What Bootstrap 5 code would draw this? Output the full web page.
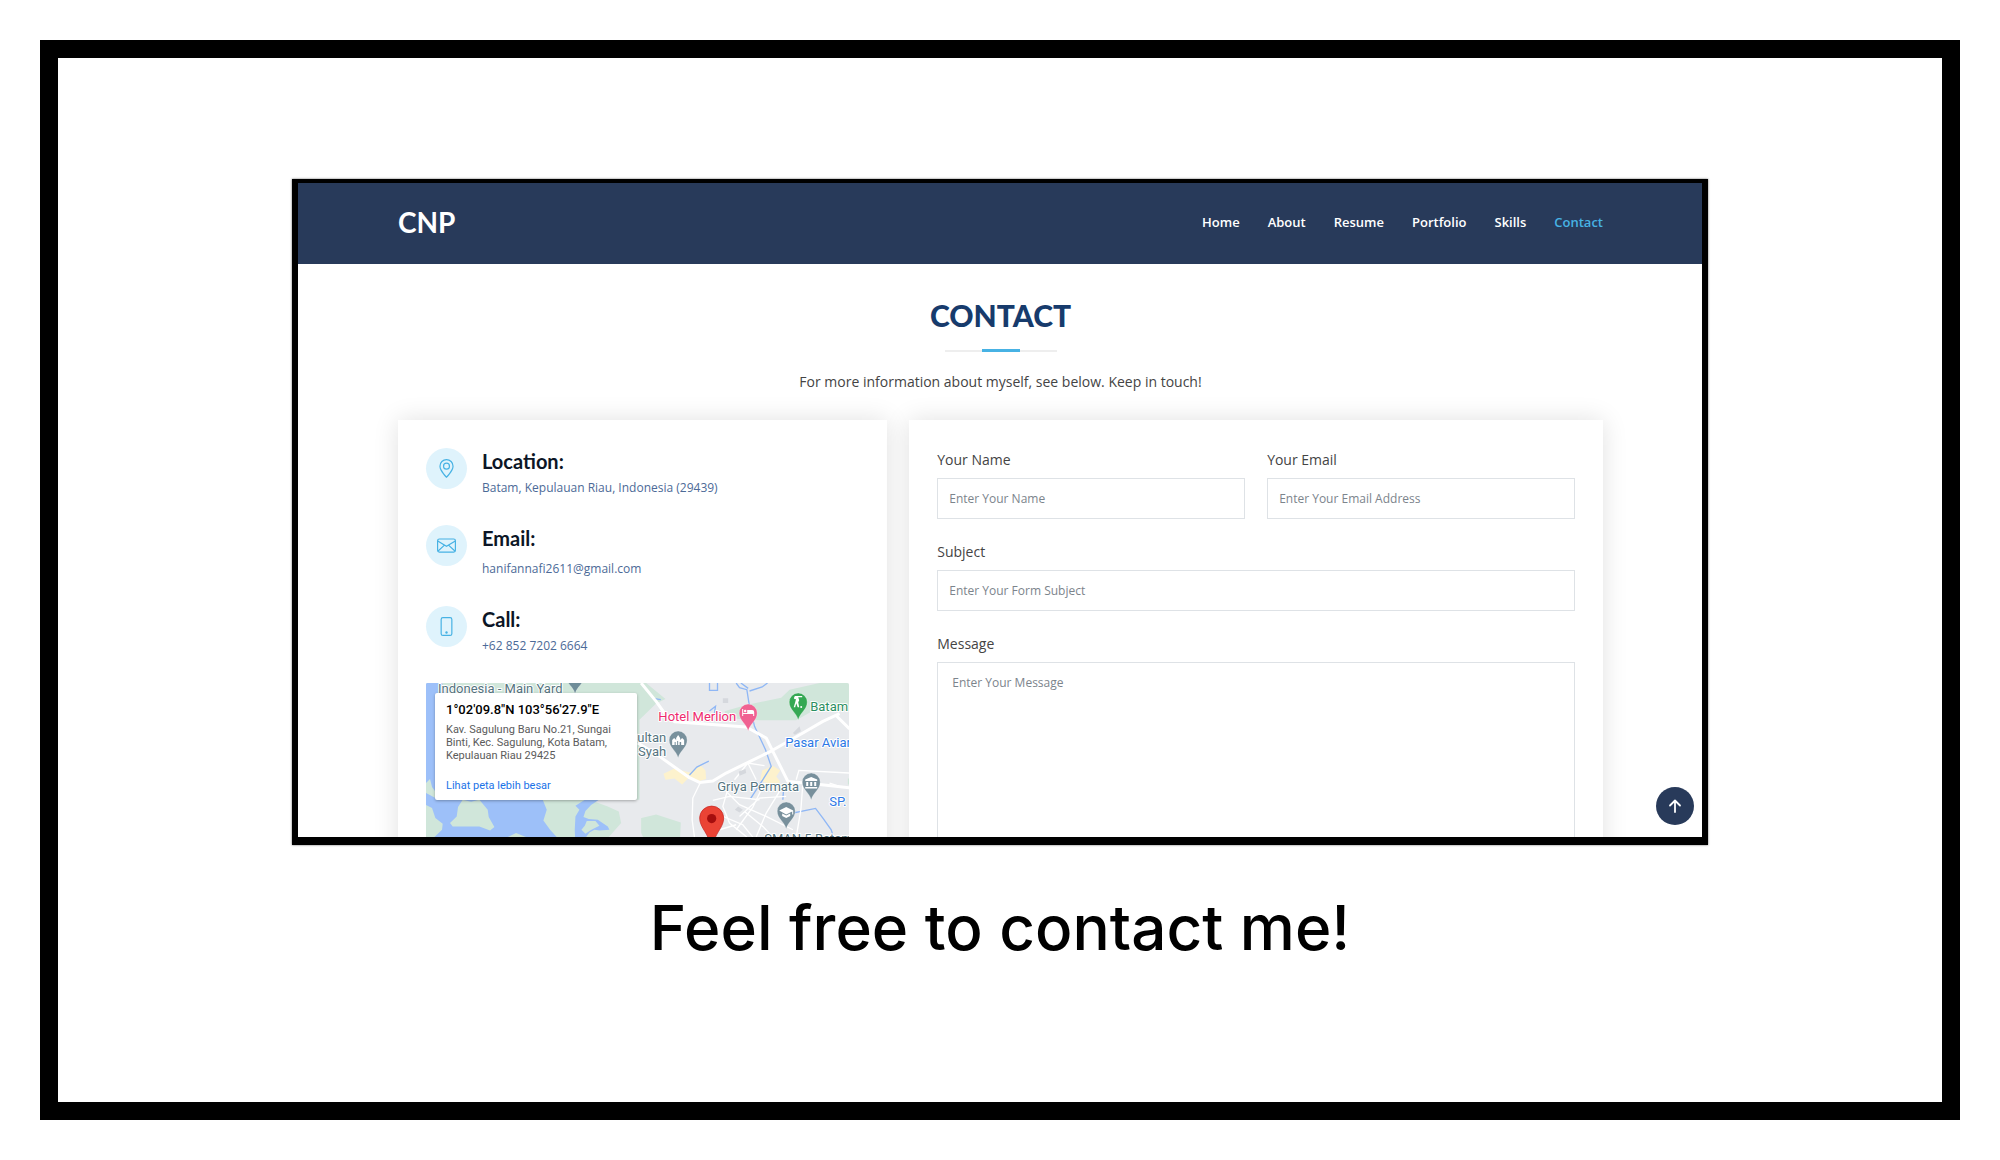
<!DOCTYPE html>
<html lang="en">
<head>
<meta charset="utf-8">
<meta name="viewport" content="width=device-width, initial-scale=1">
<title>CNP - Contact</title>
<link href="https://cdn.jsdelivr.net/npm/bootstrap@5.3.0/dist/css/bootstrap.min.css" rel="stylesheet">
<style>
:root{--navy:#283a5a;--title:#173b6c;--sky:#47b2e4}
body{font-family:"Open Sans","Noto Sans",sans-serif;color:#444;background:#fff;padding:40px}
.slide{border:18px solid #000;min-height:calc(100vh - 80px);padding:121px 24px 48px}
.screen{max-width:1416px;aspect-ratio:1416/666;border:solid #000;border-width:4px 6px 8px;box-shadow:0 0 2px rgba(0,0,0,.6);overflow:hidden}
.site-head{background:var(--navy);min-height:81px;padding:0 99px 3px 100px}
.brand{font-family:Lato,sans-serif;font-size:28px;line-height:36px;font-weight:700;color:#fff}
.site-nav{gap:28px;font-size:13px;line-height:20px;font-weight:600}
.site-nav a{color:#fff}
.site-nav a.active{color:var(--sky)}
.contact{padding:33px 99px 0 100px}
.contact h1{font-family:Lato,sans-serif;font-weight:900;font-size:30px;line-height:36px;color:var(--title)}
.rule{width:112px;height:3px;margin-top:16px;background:linear-gradient(#eee,#eee) center/100% 2px no-repeat}
.rule span{width:38px;height:3px;background:var(--sky)}
.intro{font-size:14px;line-height:24px;margin:18px 0 26px}
.contact .row{--bs-gutter-x:22px}
.panel{padding:28px;min-height:560px;box-shadow:0 0 24px rgba(0,0,0,.12);background:#fff}
.info{gap:15px;margin-bottom:27px}
.info-icon{width:41px;height:41px;background:#dff3fc;color:var(--sky)}
.info h2{font-family:Lato,sans-serif;font-weight:700;font-size:20px;line-height:24px;color:#0c1626;margin:1px 0 5px}
.info p{font-size:12px;line-height:20px;color:#4c6a97}
.info .mail-line{margin-top:9px}
.panel label{font-size:14px;line-height:24px;margin-bottom:6px}
.panel .form-control{font-size:12px;line-height:20px;border-color:#dee2e6;height:41px;padding:8px 11px}
.panel .form-control::placeholder{color:#7c848c}
.panel textarea.form-control{height:240px;padding:10px 14px}
.field{margin-bottom:21px}
.map{margin-right:10px;border-radius:2px;overflow:hidden;font-family:Roboto,sans-serif}
.map-card{top:10px;left:9px;width:202px;height:107px;padding:8px 11px;background:#fff;border-radius:2px;box-shadow:0 1px 3px rgba(0,0,0,.3);font-size:11px;line-height:13px;color:#5b5b5b}
.map-card strong{font-size:13px;line-height:18px;font-weight:500;color:#000}
.map-card a{color:#1a73e8}
.to-top{width:38px;height:38px;right:8px;bottom:12px;background:var(--navy);color:#fff}
.tagline{font-family:Inter,sans-serif;font-weight:500;font-size:62px;line-height:72px;color:#000;margin-top:47px}
</style>
</head>
<body>
<main class="slide">
  <div class="screen position-relative mx-auto bg-white">
    <header class="site-head d-flex align-items-center justify-content-between">
      <a class="brand text-decoration-none" href="#">CNP</a>
      <nav class="site-nav d-flex" aria-label="Main">
        <a class="text-decoration-none" href="#">Home</a>
        <a class="text-decoration-none" href="#">About</a>
        <a class="text-decoration-none" href="#">Resume</a>
        <a class="text-decoration-none" href="#">Portfolio</a>
        <a class="text-decoration-none" href="#">Skills</a>
        <a class="text-decoration-none active" href="#" aria-current="page">Contact</a>
      </nav>
    </header>
    <section class="contact">
      <div class="d-flex flex-column align-items-center">
        <h1 class="m-0">CONTACT</h1>
        <div class="rule d-flex justify-content-center"><span></span></div>
        <p class="intro">For more information about myself, see below. Keep in touch!</p>
      </div>
      <div class="row">
        <div class="col-5">
          <div class="panel">
            <div class="info d-flex">
              <span class="info-icon rounded-circle d-flex align-items-center justify-content-center flex-shrink-0">
                <svg width="19" height="19" viewBox="0 0 16 16" fill="currentColor" aria-hidden="true"><path d="M12.166 8.94c-.524 1.062-1.234 2.12-1.96 3.07A31.493 31.493 0 0 1 8 14.58a31.481 31.481 0 0 1-2.206-2.57c-.726-.95-1.436-2.008-1.96-3.07C3.304 7.867 3 6.862 3 6a5 5 0 0 1 10 0c0 .862-.305 1.867-.834 2.94zM8 16s6-5.686 6-10A6 6 0 0 0 2 6c0 4.314 6 10 6 10z"/><path d="M8 8a2 2 0 1 1 0-4 2 2 0 0 1 0 4zm0 1a3 3 0 1 0 0-6 3 3 0 0 0 0 6z"/></svg>
              </span>
              <div><h2>Location:</h2><p class="mb-0">Batam, Kepulauan Riau, Indonesia (29439)</p></div>
            </div>
            <div class="info d-flex">
              <span class="info-icon rounded-circle d-flex align-items-center justify-content-center flex-shrink-0">
                <svg width="19" height="19" viewBox="0 0 16 16" fill="none" stroke="currentColor" aria-hidden="true"><rect x=".5" y="2.5" width="15" height="11" rx="1.5"/><path d="M.6 4.2 8 8.6l7.4-4.4M.7 12.8l5.6-5.1M15.3 12.8 9.7 7.7"/></svg>
              </span>
              <div><h2>Email:</h2><p class="mail-line mb-0">hanifannafi2611@gmail.com</p></div>
            </div>
            <div class="info d-flex">
              <span class="info-icon rounded-circle d-flex align-items-center justify-content-center flex-shrink-0">
                <svg width="19" height="19" viewBox="0 0 16 16" fill="currentColor" aria-hidden="true"><path d="M11 1a1 1 0 0 1 1 1v12a1 1 0 0 1-1 1H5a1 1 0 0 1-1-1V2a1 1 0 0 1 1-1h6zM5 0a2 2 0 0 0-2 2v12a2 2 0 0 0 2 2h6a2 2 0 0 0 2-2V2a2 2 0 0 0-2-2H5z"/><path d="M8 14a1 1 0 1 0 0-2 1 1 0 0 0 0 2z"/></svg>
              </span>
              <div><h2>Call:</h2><p class="mb-0">+62 852 7202 6664</p></div>
            </div>
            <div class="map position-relative">
              <svg class="d-block w-100" viewBox="0 0 423 180" role="img" aria-label="Map of Batam">
                <g transform="scale(.333333)">
                  <rect width="1270" height="540" fill="#e8eaed"/>
                  <!-- parks -->
                  <path fill="#d0e6da" d="M0 0H645L700 52 640 110V540H0zM640 0H660L718 48 680 66 645 90zM895 85 960 66 1065 44 1090 20 1180 0H1270V84L1180 72 1110 112 1000 112 900 105zM640 406 690 394 720 404 764 418 762 462 740 540H690L640 440zM1265 286h5v18h-5z"/>
                  <path fill="#e8eaed" d="M490 350H645V540H520L548 462 585 420 578 385 545 370z"/>
                  <!-- sea -->
                  <path fill="#9dc0f9" d="M0 0H48L60 40V540H0zM25 345H200L350 350 362 380 352 412 372 440 392 462V540H0V360z"/>
                  <path fill="#9dc0f9" d="M0 0H40V350H0zM448 368 480 348H522L495 366 478 384 472 402 488 408 515 410 545 430 550 440 520 442 505 440 490 448 480 462 478 540H450L446 440 448 400 460 380z"/>
                  <path fill="#d0e6da" d="M482 414 508 414 520 428 496 440 478 452 466 440 476 428z"/>
                  <path fill="#d0e6da" d="M0 300 12 288 18 312 28 325V345L10 335 0 330zM0 366 18 375 28 405 50 422 48 440 25 462V540H0zM110 350 135 356 160 350 185 380 188 402 205 432 192 442 160 430 130 430 80 430 72 420 92 400 96 372zM245 462 270 450 300 462V540H240z"/>
                  <!-- built-up areas -->
                  <path fill="#fdf2cd" d="M712 272 745 256 790 268 822 246 838 262 840 288 820 294 790 282 768 304 745 286 718 290zM1008 262 1040 248 1062 262 1050 280 1062 295 1040 318 1020 300 1002 292z"/>
                  <!-- rivers -->
                  <g fill="none" stroke="#8fb7f5" stroke-width="4"><path d="M930 0 940 14 962 20 968 58 985 130 1018 200 1035 250 1010 290 972 348M850 84 868 70 864 96M790 276 812 252 848 234M850 0v22h24V0M944 0 966 16M970 24 1008 12 1024 0M1090 392 1168 376 1190 405 1215 440 1222 462M1072 318 1070 350M680 46 704 50"/></g>
                  <!-- minor streets -->
                  <g fill="none" stroke="#fff" stroke-width="4"><path d="M822 300 800 345 798 410 806 470M905 318 890 370 910 420 962 462M900 325 940 365 1020 400 1100 440M925 290 965 240 1015 248M965 240 990 290M1015 300 980 372 930 440M1060 325 1020 390 990 462M940 400 1000 345 1080 340M890 400 950 425 980 462M880 440 930 425M1130 300 1124 380 1110 462M1110 290 1118 262 1270 270M1210 300 1240 310M955 385 1010 430 1040 462M860 352 910 340 1000 350"/></g>
                  <!-- main roads -->
                  <g fill="none" stroke="#fff" stroke-width="9" stroke-linejoin="round"><path d="M645 0 690 55 715 90 745 116 960 132 1020 165 1040 205 1085 295 1160 302 1270 314M635 180 700 220 790 284 820 298 860 294 900 270 1035 204 1130 150 1190 115 1240 92M1228 96 1270 138"/></g>
                  <g fill="#d5d8dd"><path d="M1100 150 1120 130 1124 145 1106 155zM938 265 958 258 960 270 940 278zM926 380 936 370 950 380 940 388zM890 46h16v14h-16z"/></g>
                </g>
                <g font-size="13" stroke="#fff" stroke-width="2" stroke-linejoin="round" paint-order="stroke">
                  <g fill="#557480">
                    <text x="12" y="10">Indonesia - Main Yard</text>
                    <text x="240" y="59" text-anchor="end">Sultan</text>
                    <text x="240" y="73" text-anchor="end">Syah</text>
                    <text x="373" y="108" text-anchor="end">Griya Permata</text>
                    <text x="338" y="160">SMAN 5 Batam</text>
                  </g>
                  <text x="310" y="38" text-anchor="end" fill="#ee2a6e">Hotel Merlion</text>
                  <text x="384" y="28" fill="#2b8f62">Batam</text>
                  <text x="359" y="64" fill="#2c79e6">Pasar Aviari</text>
                  <text x="403" y="123" fill="#2c79e6">SP.</text>
                </g>
                <defs><path id="pin" d="M0 0C-2-8-9-10-9-18A9 9 0 0 1 9-18C9-10 2-8 0 0z" stroke="#fff" stroke-opacity=".5" stroke-width=".6"/></defs>
                <use href="#pin" x="149" y="11" fill="#6f8d99"/>
                <use href="#pin" x="322" y="48" fill="#f06292"/>
                <use href="#pin" x="372" y="37" fill="#34a853"/>
                <use href="#pin" x="252" y="75" fill="#78909c"/>
                <use href="#pin" x="385" y="117" fill="#78909c"/>
                <use href="#pin" x="360" y="146" fill="#78909c"/>
                <g fill="#fff">
                  <path d="M316 26h1v4h4v-3h5a2 2 0 0 1 2 2v4h-1v-2h-10v2h-1z"/><circle cx="319" cy="28" r="1.2"/>
                  <circle cx="369" cy="15" r="1.2"/><path d="M368 13h8v1.300h-4l1 3-1 2 1 5h-1.500l-1.500-4-1 4h-1.500l1.500-5 1-4z"/><circle cx="375" cy="24" r="1"/>
                  <path d="M246 62v-5l2-2 2 2v-2l2-3 2 3v2l2-2 2 2v5h-3v-3h-1.500v3h-1.500v-4h-1v4h-1.500v-3h-1v3z"/>
                  <path d="M379 96.500 385 94l6 2.500V98h-12zM380 99h2v4h-2zM384 99h2v4h-2zM388 99h2v4h-2zM379 104h12v1.500h-12z"/>
                  <path d="M353 127.500 360 124l7 3.500v4h-1V128.500L360 131.500zM356 130.500l4 2 4-2v2.500l-4 2-4-2z"/>
                </g>
                <path d="M285.500 166C283 150 273.500 145 273.500 135a12 12 0 0 1 24 0C297.500 145 288 150 285.500 166z" fill="#ea4335" stroke="#c5221f" stroke-width=".7"/>
                <circle cx="285.500" cy="135.500" r="4.600" fill="#a50e0e"/>
              </svg>
              <div class="map-card position-absolute d-flex flex-column align-items-start">
                <strong class="text-nowrap">1°02'09.8"N 103°56'27.9"E</strong>
                <span class="mt-1 text-nowrap">Kav. Sagulung Baru No.21, Sungai<br>Binti, Kec. Sagulung, Kota Batam,<br>Kepulauan Riau 29425</span>
                <a class="text-decoration-none mt-auto" href="#">Lihat peta lebih besar</a>
              </div>
            </div>
          </div>
        </div>
        <div class="col-7">
          <form class="panel">
            <div class="row">
              <div class="col-6 field"><label class="d-block" for="name">Your Name</label><input class="form-control rounded-0" id="name" type="text" placeholder="Enter Your Name"></div>
              <div class="col-6 field"><label class="d-block" for="email">Your Email</label><input class="form-control rounded-0" id="email" type="email" placeholder="Enter Your Email Address"></div>
            </div>
            <div class="field"><label class="d-block" for="subject">Subject</label><input class="form-control rounded-0" id="subject" type="text" placeholder="Enter Your Form Subject"></div>
            <div><label class="d-block" for="message">Message</label><textarea class="form-control rounded-0" id="message" placeholder="Enter Your Message"></textarea></div>
          </form>
        </div>
      </div>
    </section>
    <button class="to-top btn rounded-circle p-0 border-0 position-absolute d-flex align-items-center justify-content-center" type="button" aria-label="Back to top">
      <svg width="16" height="16" viewBox="0 0 16 16" fill="none" stroke="currentColor" stroke-width="1.800" stroke-linecap="round" stroke-linejoin="round" aria-hidden="true"><path d="M8 14V2.500M3 7.500l5-5 5 5"/></svg>
    </button>
  </div>
  <p class="tagline text-center mb-0">Feel free to contact me!</p>
</main>
<script src="https://cdn.jsdelivr.net/npm/bootstrap@5.3.0/dist/js/bootstrap.bundle.min.js"></script>
</body>
</html>
